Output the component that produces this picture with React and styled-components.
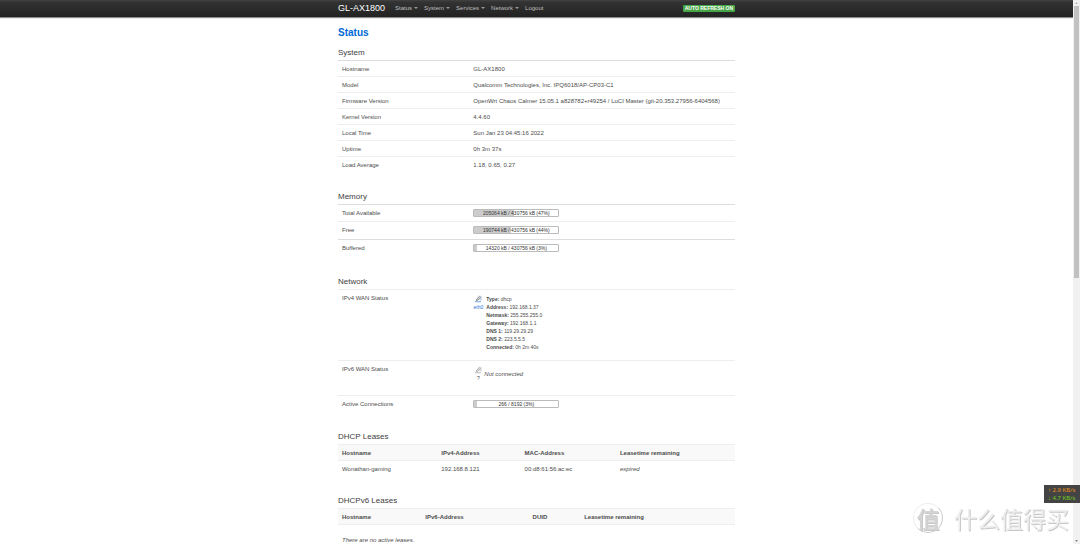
import React from "react";
import styled, { createGlobalStyle } from "styled-components";

const GlobalStyle = createGlobalStyle`
  * {
    box-sizing: border-box;
  }
  body {
    margin: 0;
    background: #fff;
    color: #4c4c4c;
    font-family: "Liberation Sans", Arial, sans-serif;
    font-size: 6px;
    line-height: 8px;
  }
  h2, h3, dl, dd, p {
    margin: 0;
  }
`;

const Layout = styled.div`
  display: flex;
  height: 100vh;
  overflow: hidden;
`;

const Page = styled.div`
  flex: 1;
  min-width: 0;
`;

const Container = styled.div`
  width: 37%;
  min-width: 397px;
  margin: 0 auto;
`;

const Header = styled.header`
  height: 17px;
  background: linear-gradient(#444 0, #333 2px, #222 100%);
  box-shadow: 0 1px 1px rgba(0, 0, 0, 0.45);
  ${Container} {
    display: flex;
    align-items: center;
    height: 16px;
  }
`;

const Brand = styled.a`
  color: #fff;
  font-size: 9px;
  line-height: 12px;
  margin-right: 10px;
  text-decoration: none;
`;

const Nav = styled.nav`
  display: flex;
  flex: 1;
  gap: 6px;
`;

const NavButton = styled.button`
  display: flex;
  align-items: center;
  gap: 2px;
  border: 0;
  padding: 0;
  background: none;
  color: #bfbfbf;
  font: inherit;
  &::after {
    content: "";
    border: 2px solid transparent;
    border-top-color: #999;
    border-bottom: 0;
  }
`;

const NavLink = styled.a`
  color: #bfbfbf;
  text-decoration: none;
`;

const RefreshButton = styled.button`
  border: 0;
  border-radius: 1px;
  padding: 0 2px;
  background: #46a546;
  color: #fff;
  font: bold 5px / 7px "Liberation Sans", Arial, sans-serif;
  text-transform: uppercase;
`;

const PageTitle = styled.h2`
  margin-top: 9px;
  color: #0069d6;
  font-size: 10px;
  line-height: 14px;
`;

const Section = styled.section`
  margin-top: ${(props) => props.$gap || 18}px;
  h3 {
    color: #404040;
    font-size: 8px;
    font-weight: normal;
    line-height: 14px;
  }
`;

const Row = styled.div`
  display: grid;
  grid-template-columns: 33% 1fr;
  column-gap: 3px;
  align-items: start;
  min-height: ${(props) => props.$height || 16}px;
  padding: 4px 4px 3px;
  border-top: 1px solid ${(props) => (props.$strong ? "#ddd" : "#eee")};
`;

const Meter = styled.div`
  position: relative;
  width: 86px;
  height: 8px;
  border: 1px solid #bbb;
  border-radius: 1px;
  background: #fff;
  color: #333;
  font-size: 5px;
  line-height: 7px;
  text-align: center;
  overflow: hidden;
  span {
    position: relative;
  }
`;

const MeterFill = styled.div`
  position: absolute;
  inset: 0 auto 0 0;
  background: #ccc;
`;

const Wan = styled.div`
  display: flex;
  align-items: ${(props) => (props.$center ? "center" : "flex-start")};
  gap: ${(props) => (props.$center ? 1 : 3)}px;
  padding-top: 1px;
`;

const Port = styled.div`
  display: flex;
  flex-direction: column;
  align-items: center;
  min-width: 10px;
  font-size: 5px;
  color: ${(props) => (props.$up ? "#2a72d8" : "#404040")};
`;

const WanDetails = styled.div`
  font-size: 5px;
`;

const Leases = styled.table`
  width: 100%;
  border-collapse: collapse;
  table-layout: fixed;
  th,
  td {
    height: 16px;
    padding: 1px 4px 0;
    border-top: 1px solid #eee;
    text-align: left;
  }
  th {
    background: #f9f9f9;
    border-bottom: 1px solid #eee;
  }
  td {
    height: 15px;
  }
`;

const Empty = styled.p`
  padding: 11px 4px 0;
  font-style: italic;
`;

const Scrollbar = styled.aside`
  display: flex;
  flex-direction: column;
  width: 7px;
  background: #f1f1f1;
  svg {
    width: 7px;
    height: 6px;
  }
`;

const Thumb = styled.div`
  height: 50%;
  margin: 0 1px auto;
  background: #c1c1c1;
`;

const Speed = styled.div`
  position: fixed;
  right: 0;
  bottom: 41px;
  width: 36px;
  padding: 1px 4px;
  background: #444;
  color: #72d01c;
  font-family: "Noto Sans", sans-serif;
  font-size: 6px;
  div:first-child {
    color: #e8901c;
  }
`;

const Watermark = styled.div`
  position: fixed;
  right: 11px;
  bottom: 11px;
  display: flex;
  align-items: center;
  gap: 11px;
  color: #eee;
  font-family: "Noto Sans CJK SC", sans-serif;
  font-size: 23px;
  line-height: 30px;
  text-shadow: 1px 1px 0 #c8c8c8;
`;

const Seal = styled.span`
  display: flex;
  align-items: center;
  justify-content: center;
  width: 30px;
  height: 30px;
  border: 1px solid #eee;
  border-right-color: #ccc;
  border-bottom-color: #c8c8c8;
  border-radius: 50%;
  color: #d4d4d4;
  font-weight: 500;
  line-height: 28px;
`;

const systemRows = [
  ["Hostname", "GL-AX1800"],
  ["Model", "Qualcomm Technologies, Inc. IPQ6018/AP-CP03-C1"],
  [
    "Firmware Version",
    "OpenWrt Chaos Calmer 15.05.1 a828782+r49254 / LuCI Master (git-20.353.27956-6404568)",
  ],
  ["Kernel Version", "4.4.60"],
  ["Local Time", "Sun Jan 23 04:45:16 2022"],
  ["Uptime", "0h 3m 37s"],
  ["Load Average", "1.18, 0.65, 0.27"],
];

const memoryRows = [
  ["Total Available", "205064 kB / 430756 kB (47%)", 47],
  ["Free", "190744 kB / 430756 kB (44%)", 44],
  ["Buffered", "14320 kB / 430756 kB (3%)", 3],
];

const wanRows = [
  ["Type", "dhcp"],
  ["Address", "192.168.1.37"],
  ["Netmask", "255.255.255.0"],
  ["Gateway", "192.168.1.1"],
  ["DNS 1", "119.29.29.29"],
  ["DNS 2", "223.5.5.5"],
  ["Connected", "0h 2m 40s"],
];

function Progress({ label, value }) {
  return (
    <Meter role="meter" aria-valuenow={value} aria-label={label}>
      <MeterFill style={{ width: `${value}%` }} />
      <span>{label}</span>
    </Meter>
  );
}

function PortIcon({ up }) {
  return (
    <svg width="8" height="8" viewBox="0 0 16 16" aria-hidden="true">
      <path d="M7 1h7v10H4z" fill={up ? "#e4eaf0" : "#f0f0f0"} />
      <path d="M14 2v9" fill="none" stroke={up ? "#a9c0dc" : "#ccc"} strokeWidth="2" />
      <path d="M2 13.500h12" fill="none" stroke={up ? "#76a6dc" : "#bbb"} strokeWidth="2" />
      <path d="M4 11l2-3 5-5 2 2-5 5z" fill="#ddd" stroke={up ? "#666" : "#999"} strokeWidth="1.2" />
    </svg>
  );
}

function LeaseTable({ columns, children }) {
  return (
    <Leases>
      <colgroup>
        {columns.map(([name, width]) => (
          <col key={name} width={width} />
        ))}
      </colgroup>
      <thead>
        <tr>
          {columns.map(([name]) => (
            <th key={name}>{name}</th>
          ))}
        </tr>
      </thead>
      {children}
    </Leases>
  );
}

export default function App() {
  return (
    <>
      <GlobalStyle />
      <Layout>
        <Page>
          <Header>
            <Container>
              <Brand href="#">GL-AX1800</Brand>
              <Nav>
                {["Status", "System", "Services", "Network"].map((name) => (
                  <NavButton key={name} type="button">
                    {name}
                  </NavButton>
                ))}
                <NavLink href="#logout">Logout</NavLink>
              </Nav>
              <RefreshButton type="button">Auto Refresh on</RefreshButton>
            </Container>
          </Header>
          <Container as="main">
            <PageTitle>Status</PageTitle>

            <Section $gap={6}>
              <h3>System</h3>
              {systemRows.map(([name, value], i) => (
                <Row key={name} $strong={i === 0}>
                  <span>{name}</span>
                  <span>{value}</span>
                </Row>
              ))}
            </Section>

            <Section>
              <h3>Memory</h3>
              {memoryRows.map(([name, label, value], i) => (
                <Row key={name} $height={i === 0 ? 17 : 18} $strong={i !== 1}>
                  <span>{name}</span>
                  <Progress label={label} value={value} />
                </Row>
              ))}
            </Section>

            <Section>
              <h3>Network</h3>
              <Row $height={71}>
                <span>IPv4 WAN Status</span>
                <Wan>
                  <Port $up>
                    <PortIcon up />
                    eth0
                  </Port>
                  <WanDetails>
                    {wanRows.map(([name, value]) => (
                      <div key={name}>
                        <strong>{name}:</strong> {value}
                      </div>
                    ))}
                  </WanDetails>
                </Wan>
              </Row>
              <Row $height={35}>
                <span>IPv6 WAN Status</span>
                <Wan $center>
                  <Port>
                    <PortIcon />?
                  </Port>
                  <em>Not connected</em>
                </Wan>
              </Row>
              <Row $height={17}>
                <span>Active Connections</span>
                <Progress label="266 / 8192 (3%)" value={3} />
              </Row>
            </Section>

            <Section>
              <h3>DHCP Leases</h3>
              <LeaseTable
                columns={[
                  ["Hostname", "25%"],
                  ["IPv4-Address", "21%"],
                  ["MAC-Address", "24%"],
                  ["Leasetime remaining", "30%"],
                ]}
              >
                <tbody>
                  <tr>
                    <td>Wonathan-gaming</td>
                    <td>192.168.8.121</td>
                    <td>00:d8:61:56:ac:ec</td>
                    <td>
                      <em>expired</em>
                    </td>
                  </tr>
                </tbody>
              </LeaseTable>
            </Section>

            <Section>
              <h3>DHCPv6 Leases</h3>
              <LeaseTable
                columns={[
                  ["Hostname", "21%"],
                  ["IPv6-Address", "27%"],
                  ["DUID", "13%"],
                  ["Leasetime remaining", "39%"],
                ]}
              />
              <Empty>There are no active leases.</Empty>
            </Section>
          </Container>
        </Page>
        <Scrollbar aria-hidden="true">
          <svg viewBox="0 0 7 7">
            <path d="M2 4.500l1.500-2 1.500 2z" fill="#999" />
          </svg>
          <Thumb />
          <svg viewBox="0 0 7 7">
            <path d="M2 2.500l1.500 2 1.500-2z" fill="#505050" />
          </svg>
        </Scrollbar>
      </Layout>
      <Watermark>
        <Seal>值</Seal>
        什么值得买
      </Watermark>
      <Speed>
        <div>↑ 2.9 KB/s</div>
        <div>↓ 4.7 KB/s</div>
      </Speed>
    </>
  );
}
